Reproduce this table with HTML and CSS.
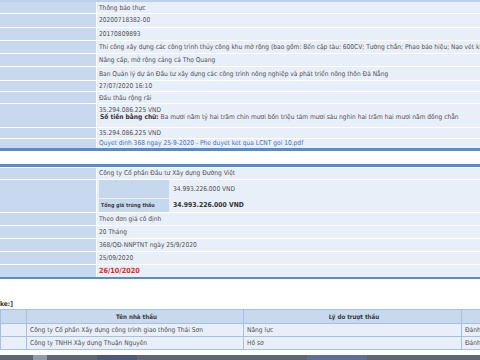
FILE: index.html
```html
<!DOCTYPE html>
<html lang="vi">
<head>
<meta charset="utf-8">
<title>Thông báo kết quả lựa chọn nhà thầu</title>
<link rel="stylesheet" href="styles.css">
</head>
<body>
<div class="page">
  <section class="sec sec-top">
    <div class="row ra"><div class="lbl"></div><div class="val">Thông báo thực</div></div>
    <div class="row rb"><div class="lbl"></div><div class="val">20200718382-00</div></div>
    <div class="row rb"><div class="lbl"></div><div class="val">20170809893</div></div>
    <div class="row rb"><div class="lbl"></div><div class="val">Thi công xây dựng các công trình thủy công khu mở rộng (bao gồm: Bến cập tàu: 600CV; Tường chắn; Phao báo hiệu; Nạo vét khu nước)</div></div>
    <div class="row rb"><div class="lbl"></div><div class="val">Nâng cấp, mở rộng cảng cá Thọ Quang</div></div>
    <div class="row rb"><div class="lbl"></div><div class="val">Ban Quản lý dự án Đầu tư xây dựng các công trình nông nghiệp và phát triển nông thôn Đà Nẵng</div></div>
    <div class="row rc"><div class="lbl"></div><div class="val">27/07/2020 16:10</div></div>
    <div class="row rc"><div class="lbl"></div><div class="val">Đấu thầu rộng rãi</div></div>
    <div class="row rd"><div class="lbl"></div><div class="val val-2">
      <span>35.294.086.225 VND</span>
      <span class="words"><b>Số tiền bằng chữ:</b> Ba mươi năm tỷ hai trăm chín mươi bốn triệu tám mươi sáu nghìn hai trăm hai mươi năm đồng chẵn</span>
    </div></div>
    <div class="row re"><div class="lbl"></div><div class="val">35.294.086.225 VND</div></div>
    <div class="row rf"><div class="lbl"></div><div class="val"><a class="file" href="#">Quyet dinh 368 ngay 25-9-2020 - Phe duyet ket qua LCNT goi 10.pdf</a></div></div>
  </section>

  <section class="sec sec-win">
    <div class="row rg"><div class="lbl"></div><div class="val">Công ty Cổ phần Đầu tư Xây dựng Đường Việt</div></div>
    <div class="row rnest"><div class="lbl"></div><div class="val val-nest">
      <div class="nrow n1"><div class="nlbl"></div><div class="nval">34.993.226.000 VND</div></div>
      <div class="nrow n2"><div class="nlbl"><b>Tổng giá trúng thầu</b></div><div class="nval total">34.993.226.000 VND</div></div>
    </div></div>
    <div class="row rh"><div class="lbl"></div><div class="val">Theo đơn giá cố định</div></div>
    <div class="row rh"><div class="lbl"></div><div class="val">20 Tháng</div></div>
    <div class="row rh"><div class="lbl"></div><div class="val">368/QĐ-NNPTNT ngày 25/9/2020</div></div>
    <div class="row rh"><div class="lbl"></div><div class="val">25/09/2020</div></div>
    <div class="row rh"><div class="lbl"></div><div class="val due">26/10/2020</div></div>
  </section>

  <p class="caption">ke:]</p>

  <table class="losers">
    <thead>
      <tr><th class="c-no"></th><th class="c-name">Tên nhà thầu</th><th class="c-why">Lý do trượt thầu</th><th class="c-eval"></th></tr>
    </thead>
    <tbody>
      <tr><td></td><td>Công ty Cổ phần Xây dựng công trình giao thông Thái Sơn</td><td>Năng lực</td><td>Đánh g</td></tr>
      <tr><td></td><td>Công ty TNHH Xây dựng Thuận Nguyên</td><td>Hồ sơ</td><td>Đánh g</td></tr>
    </tbody>
  </table>

  <div class="taskbar"><span class="tb-a"></span><span class="tb-b"></span><span class="tb-c"></span></div>
</div>
</body>
</html>
```

FILE: styles.css
```css
html, body {
  margin: 0;
  padding: 0;
  background: #ffffff;
}

.page {
  width: 480px;
  height: 360px;
  overflow: hidden;
  display: flex;
  flex-direction: column;
  font-family: "DejaVu Sans Condensed", "DejaVu Sans", sans-serif;
  font-stretch: condensed;
  font-size: 6.6px;
  color: #505050;
}

.sec {
  display: flex;
  flex-direction: column;
  gap: 1px;
  background: #ffffff;
  flex: none;
}

.sec-top {
  border-top: 2px solid #bcd0ea;
  border-bottom: 3px solid #5a8cca;
}

.sec-win {
  margin-top: 13px;
  border-top: 3px solid #5a8cca;
  padding-top: 1px;
  border-bottom: 2px solid #5a8cca;
}

.row {
  display: flex;
  gap: 1px;
  flex: none;
}

.ra { height: 11.3px; }
.rb { height: 12.3px; }
.rc { height: 10.5px; }
.rd { height: 23.2px; }
.re { height: 10px; }
.rf { height: 9px; }
.rg { height: 11px; }
.rh { height: 12px; }
.rnest { height: 32px; }

.lbl {
  width: 96px;
  flex: none;
  background: #c8d9ef;
}

.val {
  flex: 1;
  min-width: 0;
  background: #e9eff8;
  padding-left: 2px;
  display: flex;
  align-items: center;
  white-space: nowrap;
  overflow: hidden;
}

.val-2 {
  flex-direction: column;
  align-items: flex-start;
  justify-content: center;
  line-height: 7px;
  padding-bottom: 3px;
  box-sizing: border-box;
}

.words {
  padding-left: 1px;
}

.words b {
  color: #333;
}

.file {
  color: #3d6fbf;
  text-decoration: none;
}

.val-nest {
  flex-direction: column;
  align-items: stretch;
  justify-content: flex-start;
  gap: 1px;
  padding: 0 0 0 2px;
}

.nrow {
  display: flex;
  align-items: stretch;
}

.n1 { height: 18px; }
.n2 { height: 13px; }

.nlbl {
  width: 70px;
  flex: none;
  background: #c6d8ee;
  display: flex;
  align-items: center;
  padding-left: 2px;
  box-sizing: border-box;
  font-size: 5.3px;
  color: #3a3a3a;
}

.nval {
  display: flex;
  align-items: center;
  padding-left: 4px;
}

.total {
  font-weight: bold;
  font-size: 6.8px;
  color: #333;
}

.due {
  color: #e02a2a;
  font-weight: bold;
  font-size: 7.2px;
}

.caption {
  margin: 22px 0 0 0;
  height: 7px;
  line-height: 7px;
  font-weight: bold;
  color: #333;
  flex: none;
}

.losers {
  margin-top: 1px;
  width: 500px;
  border-collapse: collapse;
  table-layout: fixed;
  flex: none;
}

.losers th,
.losers td {
  border: 1px solid #a7c0e0;
  padding: 0 0 0 3px;
  text-align: left;
  white-space: nowrap;
  overflow: hidden;
  height: 12px;
  line-height: 12px;
}

.losers th {
  background: #c8d9ef;
  font-weight: bold;
  text-align: center;
  color: #3a3a3a;
  font-size: 6.2px;
  height: 13px;
  line-height: 13px;
}

.losers td {
  background: #e9eff8;
}

.c-no { width: 22px; }
.c-name { width: 213px; }
.c-why { width: 214px; }
.c-eval { width: 40px; }

.taskbar {
  margin-top: auto;
  height: 5px;
  display: flex;
  gap: 20px;
  background: #5e6673;
  padding-left: 33px;
  flex: none;
}

.tb-a { width: 14px; background: #8f9ab0; }
.tb-b { width: 40px; margin-left: 30px; background: #4b5a78; }
.tb-c { width: 60px; margin-left: 150px; background: #5a6e98; }
```
